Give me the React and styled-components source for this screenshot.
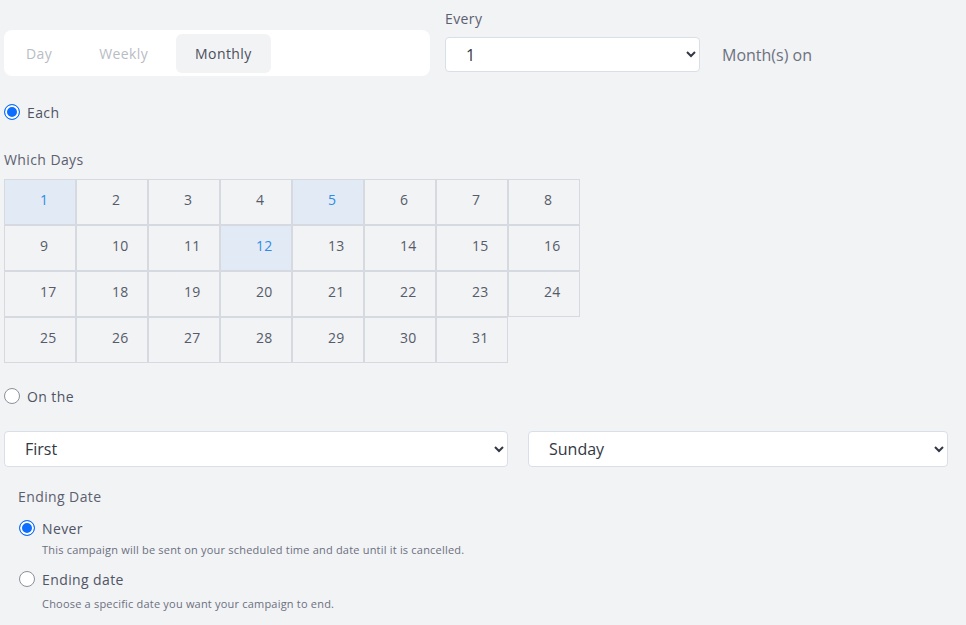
import React from 'react';
import styled, { createGlobalStyle } from 'styled-components';

const GlobalStyle = createGlobalStyle`
  html, body {
    margin: 0;
    padding: 0;
    background: #f2f3f5;
  }
  body {
    font-family: "Open Sans", "Noto Sans", sans-serif;
    color: #5b6070;
  }
  * { box-sizing: border-box; }
`;

const days = Array.from({ length: 31 }, (_, i) => i + 1);
const selectedDays = [1, 5, 12];

const Radio = ({ checked, children }) => (
  <RadioRow>
    <RadioDot checked={checked} />
    <RadioLabel checked={checked}>{children}</RadioLabel>
  </RadioRow>
);

const App = () => {
  return (
    <Page>
      <GlobalStyle />
      <TopRow>
        <Tabs>
          <Tab>Day</Tab>
          <Tab>Weekly</Tab>
          <Tab active>Monthly</Tab>
        </Tabs>
        <EveryField>
          <FieldLabel>Every</FieldLabel>
          <Select width="255px" height="35px" defaultValue="1">
            {[1, 2, 3, 4, 5, 6, 7, 8, 9, 10, 11, 12].map((n) => (
              <option key={n} value={n}>{n}</option>
            ))}
          </Select>
        </EveryField>
        <UnitText>Month(s) on</UnitText>
      </TopRow>

      <Section top="31px">
        <Radio checked>Each</Radio>
      </Section>

      <Section top="29px">
        <SectionTitle>Which Days</SectionTitle>
        <DayGrid>
          {days.map((d) => (
            <DayCell key={d} selected={selectedDays.includes(d)}>{d}</DayCell>
          ))}
        </DayGrid>
      </Section>

      <Section top="24px">
        <Radio>On the</Radio>
      </Section>

      <SelectRow>
        <Select width="504px" defaultValue="First">
          <option>First</option>
          <option>Second</option>
          <option>Third</option>
          <option>Fourth</option>
          <option>Last</option>
        </Select>
        <Select width="420px" defaultValue="Sunday">
          <option>Sunday</option>
          <option>Monday</option>
          <option>Tuesday</option>
          <option>Wednesday</option>
          <option>Thursday</option>
          <option>Friday</option>
          <option>Saturday</option>
        </Select>
      </SelectRow>

      <EndingBlock>
        <SectionTitle>Ending Date</SectionTitle>
        <EndingOption>
          <Radio checked>Never</Radio>
          <Hint>This campaign will be sent on your scheduled time and date until it is cancelled.</Hint>
        </EndingOption>
        <EndingOption>
          <Radio>Ending date</Radio>
          <Hint gap="8px">Choose a specific date you want your campaign to end.</Hint>
        </EndingOption>
      </EndingBlock>
    </Page>
  );
};

const Page = styled.div`
  padding: 9px 4px 0 4px;
  width: 966px;
  min-height: 625px;
`;

const TopRow = styled.div`
  display: flex;
  align-items: flex-end;
`;

const Tabs = styled.div`
  width: 426px;
  height: 46px;
  background: #ffffff;
  border-radius: 8px;
  display: flex;
  align-items: center;
  padding: 0 3px;
  margin-bottom: -4px;
`;

const Tab = styled.div`
  height: 39px;
  display: flex;
  align-items: center;
  padding: 0 19px;
  border-radius: 6px;
  font-size: 14px;
  letter-spacing: 0.4px;
  font-weight: 500;
  background: ${(p) => (p.active ? '#f2f3f5' : 'transparent')};
  color: ${(p) => (p.active ? '#4a4f5c' : '#b9bcc4')};
  margin-right: ${(p) => (p.active ? '0' : '9px')};
`;

const EveryField = styled.div`
  margin-left: 15px;
  display: flex;
  flex-direction: column;
`;

const FieldLabel = styled.div`
  font-size: 14px;
  letter-spacing: 0.4px;
  font-weight: 500;
  color: #5b6070;
  margin-bottom: 9px;
`;

const Select = styled.select`
  width: ${(p) => p.width};
  height: ${(p) => p.height || '36px'};
  padding: 0 16px;
  background: #ffffff;
  border: 1px solid #d9dfe8;
  border-radius: 4px;
  font-family: "Open Sans", "Noto Sans", sans-serif;
  font-size: 16px;
  color: #333845;
  outline: none;
`;

const UnitText = styled.div`
  margin-left: 22px;
  font-size: 16px;
  color: #6c7280;
  height: 35px;
  display: flex;
  align-items: center;
`;

const Section = styled.div`
  margin-top: ${(p) => p.top};
`;

const RadioRow = styled.label`
  display: flex;
  align-items: center;
  gap: 7px;
  height: 18px;
`;

const RadioDot = styled.span`
  width: 16px;
  height: 16px;
  border-radius: 50%;
  flex-shrink: 0;
  border: 1px solid ${(p) => (p.checked ? '#0d6efd' : '#8b909a')};
  background: ${(p) => (p.checked ? '#0d6efd' : '#ffffff')};
  box-shadow: ${(p) => (p.checked ? 'inset 0 0 0 2px #ffffff' : 'none')};
`;

const RadioLabel = styled.span`
  font-size: 14px;
  letter-spacing: 0.4px;
  font-weight: 500;
  color: #4f5565;
`;

const SectionTitle = styled.div`
  font-size: 14px;
  letter-spacing: 0.4px;
  font-weight: 500;
  color: #5b6070;
`;

const DayGrid = styled.div`
  margin-top: 10px;
  display: grid;
  grid-template-columns: repeat(8, 72px);
  grid-auto-rows: 46px;
`;

const DayCell = styled.div`
  display: flex;
  align-items: center;
  padding: 0 0 5px 35px;
  border: 1px solid #d6d9e0;
  font-size: 14px;
  letter-spacing: 0.3px;
  color: ${(p) => (p.selected ? '#2e8ce6' : '#555b6a')};
  background: ${(p) => (p.selected ? '#e2ebf5' : 'transparent')};
`;

const SelectRow = styled.div`
  margin-top: 26px;
  display: flex;
  gap: 20px;
`;

const EndingBlock = styled.div`
  margin-top: 20px;
  padding-left: 14px;
`;

const EndingOption = styled.div`
  margin-top: 13px;
  padding-left: 1px;
  & + & {
    margin-top: 13px;
  }
`;

const Hint = styled.div`
  margin-top: ${(p) => p.gap || '5px'};
  padding-left: 23px;
  font-size: 11px;
  letter-spacing: 0.2px;
  color: #6b7080;
`;

export default App;
